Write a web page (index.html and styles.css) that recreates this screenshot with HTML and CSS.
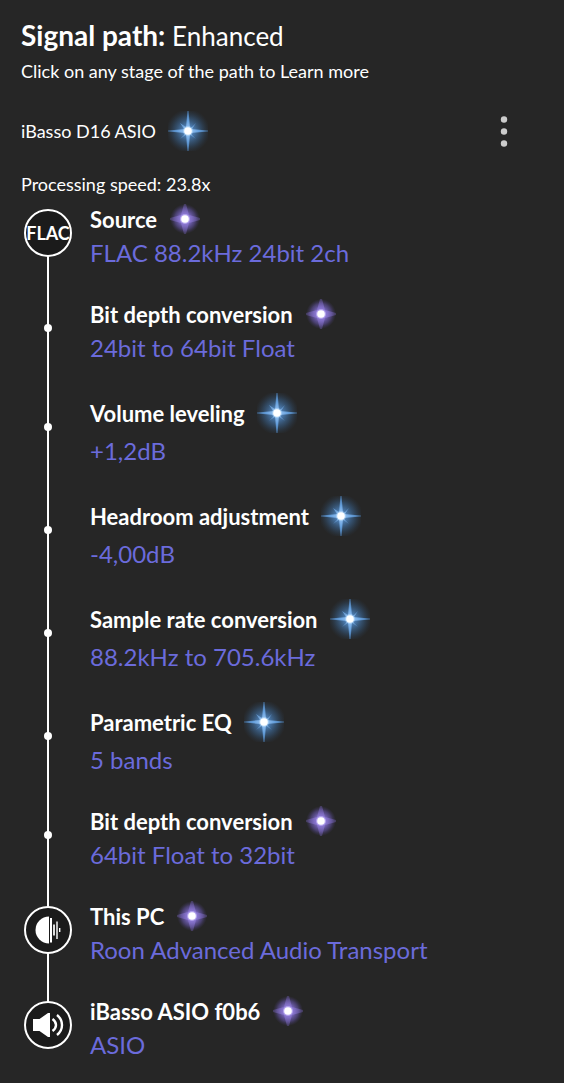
FILE: index.html
```html
<!DOCTYPE html>
<html lang="en">
<head>
  <meta charset="UTF-8" />
  <meta name="viewport" content="width=device-width, initial-scale=1" />
  <title>Signal path</title>
  <link rel="stylesheet" href="styles.css">
</head>
<body>

<!-- Shared star shapes -->
<svg class="sprite" aria-hidden="true">
  <defs>
    <radialGradient id="blueGlow">
      <stop offset="0" stop-color="#6fa9e6" />
      <stop offset="0.3" stop-color="#4a7cb2" stop-opacity="0.9" />
      <stop offset="0.65" stop-color="#365a80" stop-opacity="0.55" />
      <stop offset="1" stop-color="#2b4058" stop-opacity="0" />
    </radialGradient>
    <radialGradient id="blueRay" gradientUnits="userSpaceOnUse" cx="20" cy="20" r="21">
      <stop offset="0" stop-color="#a8d0fa" />
      <stop offset="0.5" stop-color="#659fdc" />
      <stop offset="1" stop-color="#4c80b8" stop-opacity="0.6" />
    </radialGradient>
    <radialGradient id="purpleGlow">
      <stop offset="0" stop-color="#9a84e6" />
      <stop offset="0.4" stop-color="#7866bd" stop-opacity="0.95" />
      <stop offset="0.7" stop-color="#5b4d94" stop-opacity="0.65" />
      <stop offset="1" stop-color="#42386a" stop-opacity="0" />
    </radialGradient>
    <radialGradient id="purpleRay" gradientUnits="userSpaceOnUse" cx="16" cy="16" r="16">
      <stop offset="0" stop-color="#a08be8" />
      <stop offset="0.6" stop-color="#7f6cc4" stop-opacity="0.6" />
      <stop offset="1" stop-color="#6e5cb0" stop-opacity="0.3" />
    </radialGradient>
    <symbol id="starBlue" viewBox="0 0 40 40">
      <circle cx="20" cy="20" r="22" fill="url(#blueGlow)" />
      <path fill="url(#blueRay)" d="M19.4 0H20.6L22 18L40 19.4V20.6L22 22L20.6 40H19.4L18 22L0 20.6V19.4L18 18Z" />
      <path fill="url(#blueRay)" fill-opacity="0.8" d="M12 12L21.5 18.5L28 12L21.5 21.5L28 28L20 22L12 28L18.5 21.5Z" />
      <circle cx="20" cy="20" r="5" fill="#b8dafa" fill-opacity="0.6" />
      <circle cx="20" cy="20" r="3.8" fill="#fff" />
    </symbol>
    <symbol id="starPurple" viewBox="0 0 32 32">
      <circle cx="16" cy="16" r="15" fill="url(#purpleGlow)" />
      <path fill="url(#purpleRay)" d="M15 1H17L20 12L31 15V17L20 20L17 31H15L12 20L1 17V15L12 12Z" />
      <circle cx="16" cy="16" r="5" fill="#cfc2ff" fill-opacity="0.6" />
      <circle cx="16" cy="16" r="3.8" fill="#fff" />
    </symbol>
  </defs>
</svg>

<main class="signal-path">
  <h1 class="title">Signal path: <span class="quality">Enhanced</span></h1>
  <p class="hint">Click on any stage of the path to Learn more</p>

  <div class="device">
    <span>iBasso D16 ASIO</span>
    <svg class="star star-blue" aria-hidden="true"><use href="#starBlue" /></svg>
    <button type="button" class="menu-btn" aria-label="More options">
      <svg width="8" height="32" viewBox="0 0 8 32" fill="#ccc">
        <circle cx="4" cy="4.5" r="3.2" />
        <circle cx="4" cy="16.5" r="3.2" />
        <circle cx="4" cy="28.5" r="3.2" />
      </svg>
    </button>
  </div>

  <p class="speed">Processing speed: 23.8x</p>

  <ol class="stages">
    <li>
      <button type="button" class="stage">
        <span class="marker"><span class="node">FLAC</span></span>
        <span class="info">
          <span class="name">Source <svg class="star star-purple" aria-hidden="true"><use href="#starPurple" /></svg></span>
          <span class="detail">FLAC 88.2kHz 24bit 2ch</span>
        </span>
      </button>
    </li>
    <li>
      <button type="button" class="stage">
        <span class="marker"><span class="dot"></span></span>
        <span class="info">
          <span class="name">Bit depth conversion <svg class="star star-purple" aria-hidden="true"><use href="#starPurple" /></svg></span>
          <span class="detail">24bit to 64bit Float</span>
        </span>
      </button>
    </li>
    <li>
      <button type="button" class="stage">
        <span class="marker"><span class="dot"></span></span>
        <span class="info">
          <span class="name">Volume leveling <svg class="star star-blue" aria-hidden="true"><use href="#starBlue" /></svg></span>
          <span class="detail">+1,2dB</span>
        </span>
      </button>
    </li>
    <li>
      <button type="button" class="stage">
        <span class="marker"><span class="dot"></span></span>
        <span class="info">
          <span class="name">Headroom adjustment <svg class="star star-blue" aria-hidden="true"><use href="#starBlue" /></svg></span>
          <span class="detail">-4,00dB</span>
        </span>
      </button>
    </li>
    <li>
      <button type="button" class="stage">
        <span class="marker"><span class="dot"></span></span>
        <span class="info">
          <span class="name">Sample rate conversion <svg class="star star-blue" aria-hidden="true"><use href="#starBlue" /></svg></span>
          <span class="detail">88.2kHz to 705.6kHz</span>
        </span>
      </button>
    </li>
    <li>
      <button type="button" class="stage">
        <span class="marker"><span class="dot"></span></span>
        <span class="info">
          <span class="name">Parametric EQ <svg class="star star-blue" aria-hidden="true"><use href="#starBlue" /></svg></span>
          <span class="detail">5 bands</span>
        </span>
      </button>
    </li>
    <li>
      <button type="button" class="stage">
        <span class="marker"><span class="dot"></span></span>
        <span class="info">
          <span class="name">Bit depth conversion <svg class="star star-purple" aria-hidden="true"><use href="#starPurple" /></svg></span>
          <span class="detail">64bit Float to 32bit</span>
        </span>
      </button>
    </li>
    <li>
      <button type="button" class="stage">
        <span class="marker">
          <span class="node">
            <svg width="46" height="46" viewBox="0 0 46 46" fill="#fff" aria-hidden="true">
              <path d="M24 9.5V36.5A13.5 13.5 0 0 1 24 9.5Z" />
              <rect x="25" y="11" width="2" height="24.5" />
              <rect x="28" y="17.5" width="2" height="11" fill="#ddd" />
              <rect x="31" y="14.5" width="2" height="17.5" fill="#bbb" />
              <rect x="34" y="21" width="1.4" height="4" />
            </svg>
          </span>
        </span>
        <span class="info">
          <span class="name">This PC <svg class="star star-purple" aria-hidden="true"><use href="#starPurple" /></svg></span>
          <span class="detail">Roon Advanced Audio Transport</span>
        </span>
      </button>
    </li>
    <li>
      <button type="button" class="stage">
        <span class="marker">
          <span class="node">
            <svg width="46" height="46" viewBox="0 0 46 46" fill="none" aria-hidden="true">
              <path fill="#fff" d="M8 17H14.5L23 11H25V35H23L14.5 29H8Z" />
              <path stroke="#fff" stroke-width="2.4" d="M27.5 17Q31 19.5 31 23T27.5 29M32 13Q37 17 37 23T32 33" />
            </svg>
          </span>
        </span>
        <span class="info">
          <span class="name">iBasso ASIO f0b6 <svg class="star star-purple" aria-hidden="true"><use href="#starPurple" /></svg></span>
          <span class="detail">ASIO</span>
        </span>
      </button>
    </li>
  </ol>
</main>

</body>
</html>
```
FILE: styles.css
```css
* {
  box-sizing: border-box;
}
body {
  margin: 0;
  background: #262626;
  color: #fff;
  font-family: Lato, 'Open Sans', sans-serif;
  font-size: 18px;
}

.sprite {
  position: absolute;
  width: 0;
  height: 0;
}

.signal-path {
  padding: 18px 21px;
}

.title {
  margin: 0;
  font-size: 28px;
  line-height: 34px;
  font-weight: bold;
}
.quality {
  font-size: 26px;
  font-weight: normal;
}
.hint,
.speed {
  margin: 0;
  line-height: 24px;
}
.hint {
  margin-top: 6px;
}

.device {
  display: flex;
  align-items: center;
  gap: 12px;
  margin: 28px 0 21px;
}

.menu-btn {
  display: flex;
  margin-left: auto;
  padding: 0 35px;
  border: none;
  background: none;
  cursor: pointer;
}

.star {
  flex: none;
}
.star-blue {
  width: 40px;
  height: 40px;
}
.star-purple {
  width: 32px;
  height: 32px;
}

.stages {
  position: relative;
  margin: 7px 0 0;
  padding: 0;
  list-style: none;
  display: flex;
  flex-direction: column;
  gap: 27px;
}
/* line that joins the nodes */
.stages::before {
  content: '';
  position: absolute;
  top: 30px;
  bottom: 38px;
  left: 26px;
  width: 2px;
  background: #fff;
}

.stage {
  position: relative;
  display: flex;
  gap: 15px;
  width: 100%;
  padding: 0;
  border: none;
  background: none;
  color: inherit;
  font: inherit;
  text-align: left;
  cursor: pointer;
}

.marker {
  display: flex;
  align-items: center;
  justify-content: center;
  width: 54px;
  padding-bottom: 8px;
}
.node {
  display: flex;
  align-items: center;
  justify-content: center;
  width: 48px;
  height: 48px;
  border: 2px solid #fff;
  border-radius: 50%;
  background: #1b1b1b;
  font-weight: bold;
}
.node svg {
  flex: none;
}
.dot {
  width: 8px;
  height: 8px;
  border-radius: 50%;
  background: #fff;
}

.info {
  flex: 1;
}
.name {
  display: flex;
  align-items: center;
  gap: 12px;
  font-size: 22px;
  font-weight: bold;
}
.detail {
  display: block;
  font-size: 24px;
  line-height: 36px;
  color: #6b6bdb;
}
```
